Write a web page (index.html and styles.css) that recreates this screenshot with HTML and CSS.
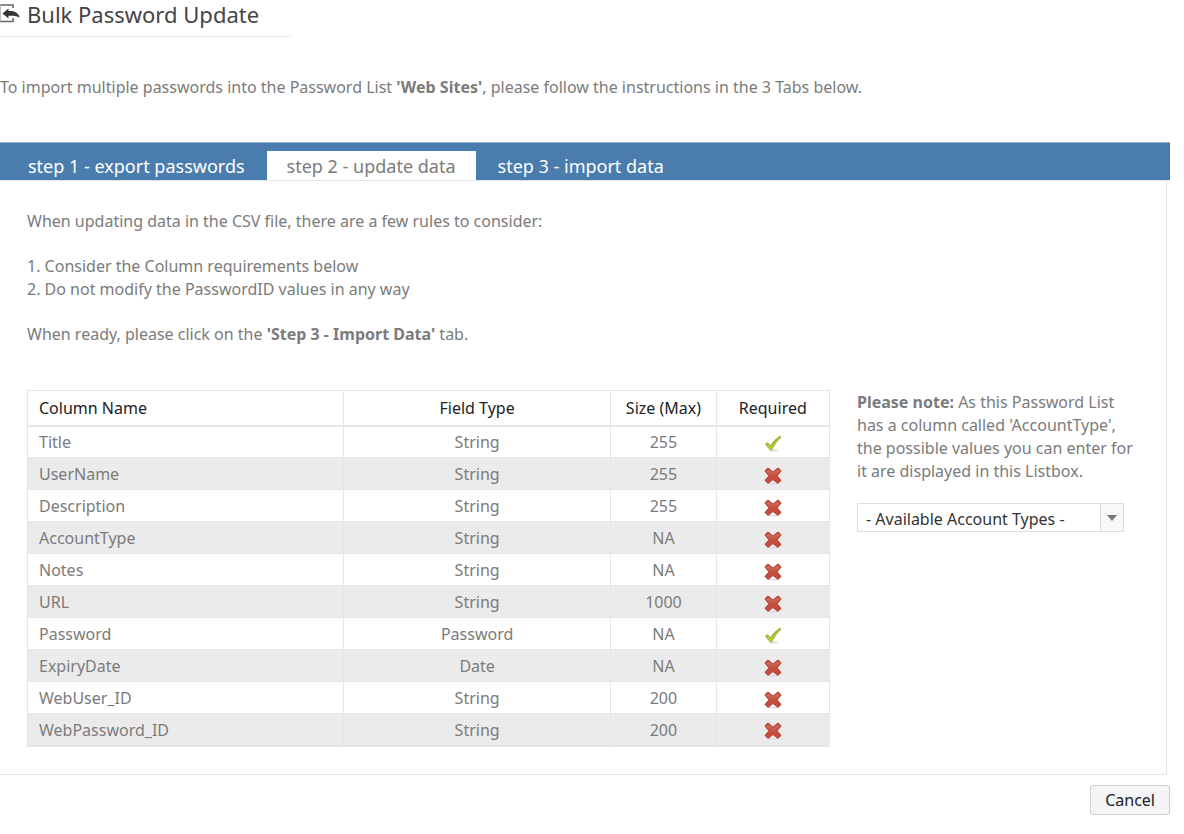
FILE: index.html
```
<!DOCTYPE html>
<html lang="en">
<head>
    <meta charset="UTF-8">
    <meta name="viewport" content="width=device-width, initial-scale=1.0">
    <title>Bulk Password Update</title>
    <link rel="stylesheet" href="styles.css">
</head>
<body>

    <!-- Shared icons -->
    <svg class="icon-defs" aria-hidden="true">
        <defs>
            <linearGradient id="greenFill" x1="0" y1="0" x2="0" y2="1">
                <stop offset="0" stop-color="#93b82c"/>
                <stop offset="1" stop-color="#b9d532"/>
            </linearGradient>
            <linearGradient id="redFill" x1="0" y1="0" x2="0" y2="1">
                <stop offset="0" stop-color="#d4756b"/>
                <stop offset="0.5" stop-color="#c84f43"/>
                <stop offset="1" stop-color="#cc4638"/>
            </linearGradient>
        </defs>
        <symbol id="yes" viewBox="0 0 18 18">
            <ellipse cx="10" cy="15.500" rx="4.500" ry="1" fill="#dedede"/>
            <path d="M1.300 9.300 L3.500 7.500 L6.600 10.500 C9 6.500 12 3.500 16.300 1.200 L17 2.300 C12.800 6 10 10 7.600 15.200 L6.500 15.200 Z" fill="url(#greenFill)" stroke="#91ad2d" stroke-width="0.800" stroke-linejoin="round"/>
        </symbol>
        <symbol id="no" viewBox="0 0 18 18">
            <ellipse cx="9" cy="16.600" rx="6" ry="0.700" fill="#d8d8d8"/>
            <path d="M4 1.200 L9 5.200 L14 1.200 L16.800 4 L12.800 8.800 L16.800 13.400 L14 16.200 L9 12.300 L4 16.200 L1.200 13.400 L5.200 8.800 L1.200 4 Z" fill="url(#redFill)" stroke="#b5483e" stroke-width="1.200" stroke-linejoin="round"/>
        </symbol>
    </svg>

    <header>
        <h1>
            <svg class="title-icon" viewBox="0 0 20 20" aria-hidden="true">
                <path d="M0 2 H13 V5 M0 18.500 H13 V15" fill="none" stroke="#666" stroke-width="1.600"/>
                <path d="M0.500 2 V18.500" fill="none" stroke="#bbb" stroke-width="1"/>
                <path d="M2.500 10.500 L8.500 5.500 V8 C14 7.800 18.500 9.500 19.800 14.800 C17 12.800 13 12.500 8.500 12.800 V15.500 Z" fill="#333"/>
            </svg>
            Bulk Password Update
        </h1>
    </header>

    <p class="intro">To import multiple passwords into the Password List <b>'Web Sites'</b>, please follow the instructions in the 3 Tabs below.</p>

    <nav class="tabs">
        <button type="button" class="tab">step 1 - export passwords</button>
        <button type="button" class="tab active">step 2 - update data</button>
        <button type="button" class="tab">step 3 - import data</button>
    </nav>

    <main class="panel">
        <p>When updating data in the CSV file, there are a few rules to consider:</p>
        <p>1. Consider the Column requirements below<br>2. Do not modify the PasswordID values in any way</p>
        <p>When ready, please click on the <b>'Step 3 - Import Data'</b> tab.</p>

        <div class="details">
            <table>
                <thead>
                    <tr>
                        <th class="name">Column Name</th>
                        <th class="type">Field Type</th>
                        <th class="size">Size (Max)</th>
                        <th class="required">Required</th>
                    </tr>
                </thead>
                <tbody>
                    <tr>
                        <td>Title</td>
                        <td>String</td>
                        <td>255</td>
                        <td><svg class="mark" role="img" aria-label="Yes"><use href="#yes"/></svg></td>
                    </tr>
                    <tr>
                        <td>UserName</td>
                        <td>String</td>
                        <td>255</td>
                        <td><svg class="mark" role="img" aria-label="No"><use href="#no"/></svg></td>
                    </tr>
                    <tr>
                        <td>Description</td>
                        <td>String</td>
                        <td>255</td>
                        <td><svg class="mark" role="img" aria-label="No"><use href="#no"/></svg></td>
                    </tr>
                    <tr>
                        <td>AccountType</td>
                        <td>String</td>
                        <td>NA</td>
                        <td><svg class="mark" role="img" aria-label="No"><use href="#no"/></svg></td>
                    </tr>
                    <tr>
                        <td>Notes</td>
                        <td>String</td>
                        <td>NA</td>
                        <td><svg class="mark" role="img" aria-label="No"><use href="#no"/></svg></td>
                    </tr>
                    <tr>
                        <td>URL</td>
                        <td>String</td>
                        <td>1000</td>
                        <td><svg class="mark" role="img" aria-label="No"><use href="#no"/></svg></td>
                    </tr>
                    <tr>
                        <td>Password</td>
                        <td>Password</td>
                        <td>NA</td>
                        <td><svg class="mark" role="img" aria-label="Yes"><use href="#yes"/></svg></td>
                    </tr>
                    <tr>
                        <td>ExpiryDate</td>
                        <td>Date</td>
                        <td>NA</td>
                        <td><svg class="mark" role="img" aria-label="No"><use href="#no"/></svg></td>
                    </tr>
                    <tr>
                        <td>WebUser_ID</td>
                        <td>String</td>
                        <td>200</td>
                        <td><svg class="mark" role="img" aria-label="No"><use href="#no"/></svg></td>
                    </tr>
                    <tr>
                        <td>WebPassword_ID</td>
                        <td>String</td>
                        <td>200</td>
                        <td><svg class="mark" role="img" aria-label="No"><use href="#no"/></svg></td>
                    </tr>
                </tbody>
            </table>

            <aside class="note">
                <label for="accountTypes"><b>Please note:</b> As this Password List has a column called 'AccountType', the possible values you can enter for it are displayed in this Listbox.</label>
                <div class="dropdown">
                    <select id="accountTypes">
                        <option>- Available Account Types -</option>
                    </select>
                    <span class="arrow"></span>
                </div>
            </aside>
        </div>
    </main>

    <footer>
        <button type="button" class="cancel">Cancel</button>
    </footer>

</body>
</html>
```

FILE: styles.css
```
* {
    box-sizing: border-box;
}
body {
    margin: 0;
    padding-right: 14px;
    background-color: #fff;
    color: #7b7b7b;
    font-family: "Noto Sans", "Open Sans", sans-serif;
    font-size: 16px;
    line-height: 23px;
}
button, select {
    font-family: inherit;
    font-size: 16px;
}
p {
    margin: 0 0 22px;
}
.icon-defs {
    display: block;
    width: 0;
    height: 0;
}
/* Page title */
h1 {
    display: flex;
    align-items: center;
    gap: 7px;
    margin: 0;
    padding: 0 32px 8px 0;
    border-bottom: 1px solid #e6e6f0;
    color: #444;
    font-size: 22px;
    font-weight: normal;
    line-height: 28px;
}
header {
    display: flex;
}
.title-icon {
    width: 20px;
    height: 20px;
    margin-bottom: 3px;
}
.intro {
    margin: 39px 0 43px;
}
/* Tab strip */
.tabs {
    display: flex;
    padding: 8px 0 0 8px;
    border-top: 1px solid #8fb3cc;
    background-color: #4a7dad;
}
.tab {
    height: 29px;
    padding: 0 20px;
    border: 0;
    background: none;
    color: #fff;
    font-size: 18px;
}
.tab.active {
    margin: 0 2px;
    background-color: #fff;
    color: #7b7b7b;
}
.panel {
    margin-right: 3px;
    padding: 29px 27px 27px;
    border: 1px solid #dfe7e9;
    border-left: 0;
}
/* Column requirements */
.details {
    display: flex;
    align-items: flex-start;
    gap: 27px;
    margin-top: 44px;
}
table {
    flex: 1;
    table-layout: fixed;
    border-collapse: collapse;
    border: 1px solid #e4e4e4;
    border-bottom-width: 2px;
}
th, td {
    height: 32px;
    padding: 2px 11px 0;
    border: 1px solid #e6e6e6;
    text-align: center;
}
th {
    height: 35px;
    border-bottom-width: 2px;
    color: #222;
    font-weight: normal;
}
th:first-child, td:first-child {
    text-align: left;
}
tbody tr:nth-child(even) {
    background-color: #ebebeb;
}
.name {
    width: 39%;
}
.type {
    width: 33%;
}
.size {
    width: 13%;
}
.required {
    width: 14%;
}
.mark {
    display: block;
    width: 18px;
    height: 18px;
    margin: 2px auto 0;
}
.note {
    width: 282px;
    padding-top: 1px;
}
.note label {
    display: block;
}
.dropdown {
    position: relative;
    width: 267px;
    margin-top: 20px;
}
select {
    display: block;
    width: 100%;
    height: 29px;
    padding: 2px 30px 0 8px;
    border: 1px solid #ddd;
    border-radius: 0;
    background-color: #fff;
    color: #333;
    appearance: none;
}
/* Arrow box drawn over the right end of the select */
.arrow {
    position: absolute;
    top: 1px;
    right: 1px;
    bottom: 1px;
    display: flex;
    align-items: center;
    justify-content: center;
    width: 23px;
    border-left: 1px solid #ddd;
    background-color: #f8f8f8;
    pointer-events: none;
}
.arrow::after {
    content: "";
    border: 5px solid transparent;
    border-top: 6px solid #777;
    border-bottom: 0;
}
footer {
    display: flex;
    justify-content: flex-end;
    padding: 10px 0;
}
.cancel {
    height: 30px;
    padding: 0 14px;
    border: 1px solid #ccc;
    border-radius: 3px;
    background-color: #f4f5f7;
    color: #222;
}
```
